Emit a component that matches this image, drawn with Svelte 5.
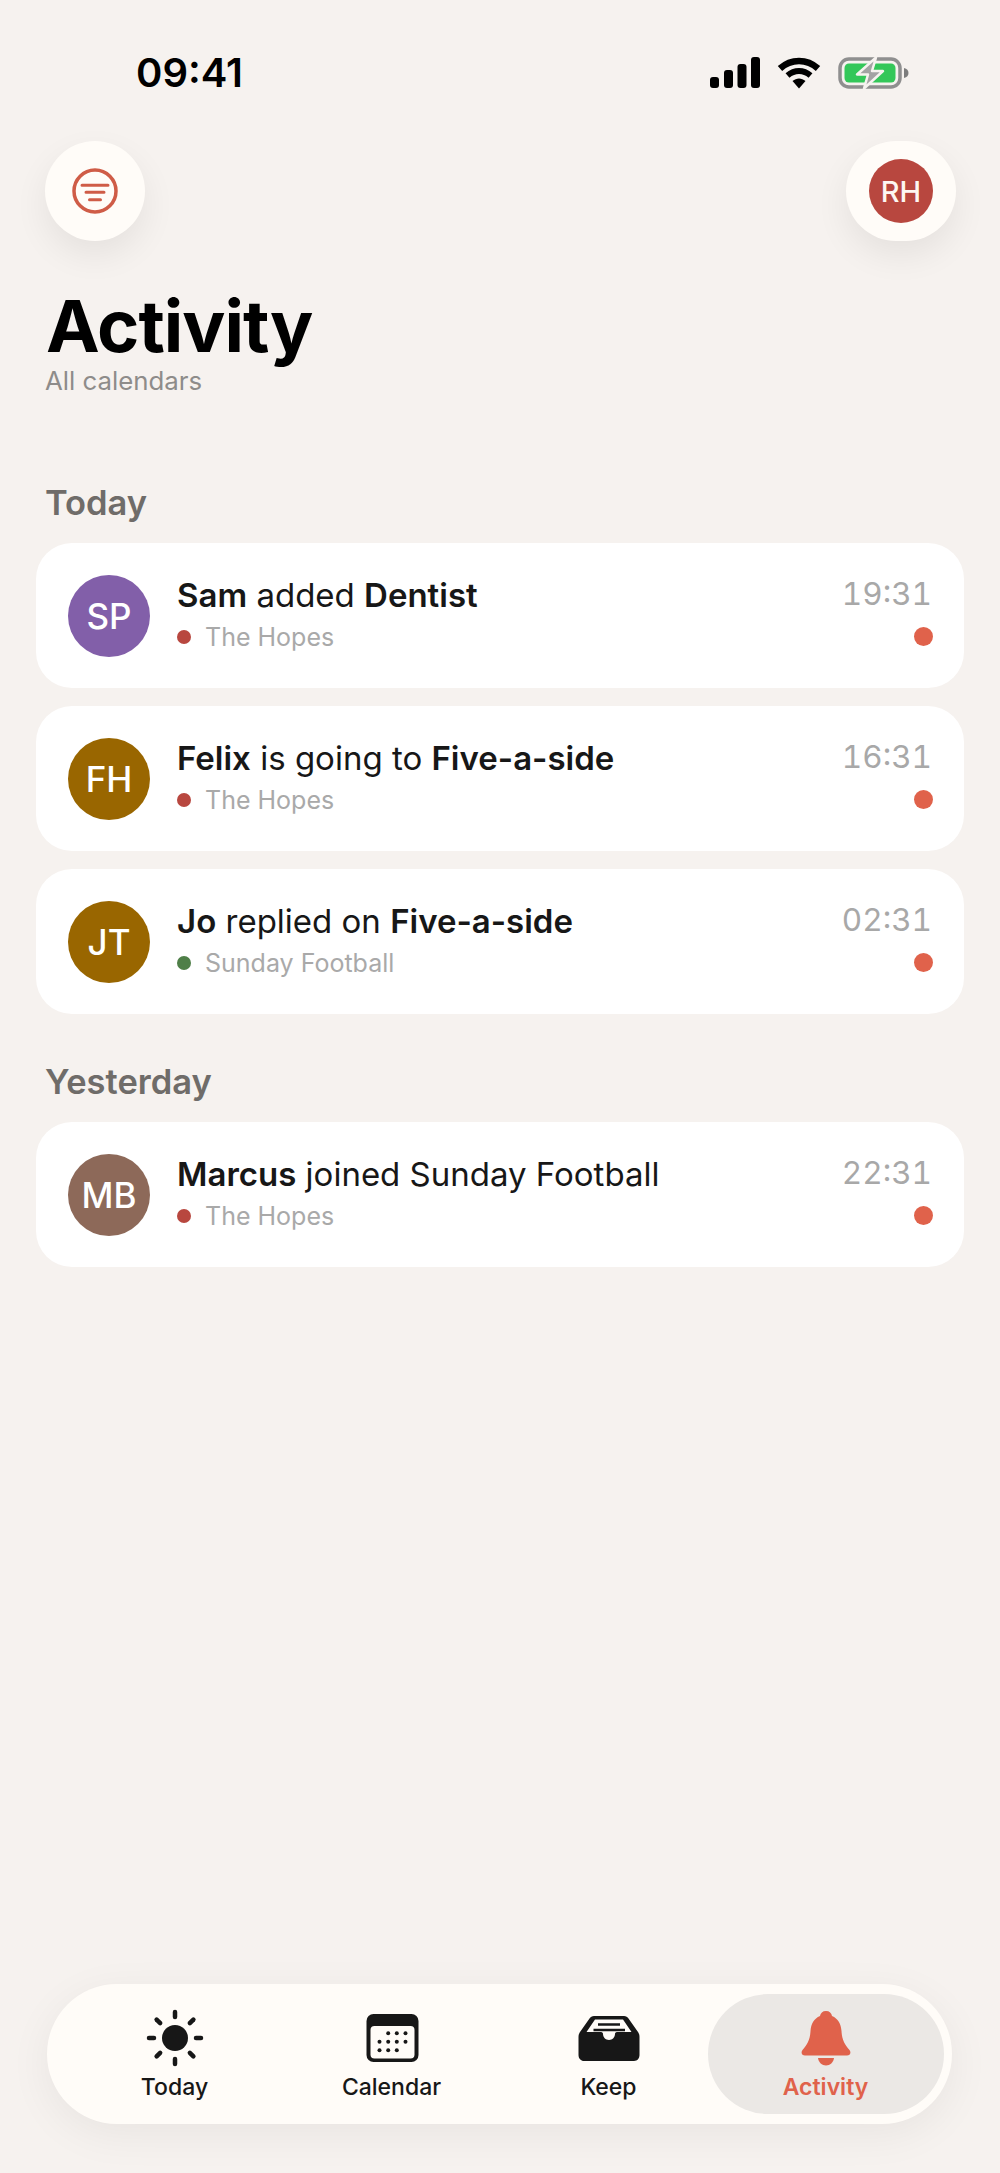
<script>
    const sections = [
        {
            label: "Today",
            items: [
                { initials: "SP", color: "#825fa9", parts: [["Sam", true], [" added ", false], ["Dentist", true]], calendar: "The Hopes", dot: "#b8473f", time: "19:31" },
                { initials: "FH", color: "#996600", parts: [["Felix", true], [" is going to ", false], ["Five-a-side", true]], calendar: "The Hopes", dot: "#b8473f", time: "16:31" },
                { initials: "JT", color: "#996600", parts: [["Jo", true], [" replied on ", false], ["Five-a-side", true]], calendar: "Sunday Football", dot: "#4f7f48", time: "02:31" },
            ],
        },
        {
            label: "Yesterday",
            items: [
                { initials: "MB", color: "#8d6959", parts: [["Marcus", true], [" joined Sunday Football", false]], calendar: "The Hopes", dot: "#b8473f", time: "22:31" },
            ],
        },
    ];

    const rays = [0, 45, 90, 135, 180, 225, 270, 315];
    const calDots = [
        [26.2, 25.3], [34.8, 25.3], [43.5, 25.3],
        [17.5, 33.7], [26.2, 33.7], [34.8, 33.7], [43.5, 33.7],
        [17.5, 42.3], [26.2, 42.3], [34.8, 42.3],
    ];
</script>

<div class="page">
    <header class="status">
        <span class="clock">09:41</span>
        <div class="status-icons">
            <svg width="50" height="32" viewBox="0 0 50 32">
                <rect x="0" y="20" width="9" height="11" rx="3" fill="#000" />
                <rect x="14" y="13" width="9" height="18" rx="3" fill="#000" />
                <rect x="27.500" y="7" width="9" height="24" rx="3" fill="#000" />
                <rect x="41" y="0" width="9" height="31" rx="3" fill="#000" />
            </svg>
            <svg width="44" height="32" viewBox="0 0 44 32">
                <path d="M3 11.500 C14 1.500 30 1.500 41 11.500" fill="none" stroke="#000" stroke-width="6.500" />
                <path d="M10.500 18.500 C17.500 12.500 26.500 12.500 33.500 18.500" fill="none" stroke="#000" stroke-width="6" />
                <path d="M15.500 24 C19.500 20.500 24.500 20.500 28.500 24 L22 31.500 Z" fill="#000" />
            </svg>
            <svg width="72" height="34" viewBox="0 0 72 34">
                <rect x="2" y="3" width="60" height="28" rx="9" fill="none" stroke="#8f8f8f" stroke-width="3.500" />
                <rect x="6.500" y="7.500" width="51" height="19" rx="4.500" fill="#34c759" />
                <path d="M66 12 C69 12.500 70.500 14.500 70.500 17 C70.500 19.500 69 21.500 66 22 Z" fill="#7d7d7d" />
                <path d="M38 1.500 L19 18.500 L30 18.500 L26 32.500 L45 15 L34 15 Z" fill="#a3a3a3" stroke="#f6f2ef" stroke-width="2.500" stroke-linejoin="round" />
            </svg>
        </div>
    </header>

    <div class="toolbar">
        <button class="round" aria-label="Filter">
            <svg width="48" height="48" viewBox="0 0 48 48" fill="none" stroke="#cf5c47" stroke-linecap="round">
                <circle cx="24" cy="24" r="21" stroke-width="3.500" />
                <path d="M11 18.300 H37 M15 25.300 H33 M18.500 32.700 H29.500" stroke-width="3" />
            </svg>
        </button>
        <button class="round wide" aria-label="Account"><span class="me">RH</span></button>
    </div>

    <h1>Activity</h1>
    <p class="subtitle">All calendars</p>

    {#each sections as section}
        <section>
            <h2>{section.label}</h2>
            <ul>
                {#each section.items as item}
                    <li class="card">
                        <span class="avatar" style="background: {item.color}">{item.initials}</span>
                        <div class="body">
                            <p class="headline">
                                {#each item.parts as [text, bold]}{#if bold}<strong>{text}</strong>{:else}{text}{/if}{/each}
                            </p>
                            <p class="calendar">
                                <span class="cal-dot" style="background: {item.dot}"></span>{item.calendar}
                            </p>
                        </div>
                        <div class="meta">
                            <span class="time">{item.time}</span>
                            <span class="unread"></span>
                        </div>
                    </li>
                {/each}
            </ul>
        </section>
    {/each}

    <nav class="tabs">
        <div class="tab">
            <svg width="60" height="60" viewBox="0 0 60 60">
                <circle cx="30" cy="30" r="13" fill="#171717" />
                {#each rays as deg}
                    <line x1="30" y1="4" x2="30" y2="9" stroke="#171717" stroke-width="4.500" stroke-linecap="round" transform="rotate({deg} 30 30)" />
                {/each}
            </svg>
            <span>Today</span>
        </div>
        <div class="tab">
            <svg width="60" height="60" viewBox="0 0 60 60">
                <rect x="4.500" y="6" width="52" height="48" rx="7" fill="#171717" />
                <rect x="8.500" y="18" width="44" height="32.500" rx="4" fill="#fffcf8" />
                {#each calDots as [cx, cy]}
                    <circle {cx} {cy} r="2" fill="#171717" />
                {/each}
            </svg>
            <span>Calendar</span>
        </div>
        <div class="tab">
            <svg width="62" height="60" viewBox="0 0 62 60">
                <path d="M16 8 H46 C48 8 49.500 9 50.500 10.500 L60 24 C61 25.500 61.500 27 61.500 29 V47 C61.500 50 59.500 53 56 53 H6 C3 53 0.500 50.500 0.500 47 V29 C0.500 27 1 25.500 2 24 L11.500 10.500 C12.500 9 14 8 16 8 Z" fill="#171717" />
                <path d="M17 11.500 H45 L53.500 24 H39 C37.500 24 37 25 37 26 C37 29 34.500 32 31 32 C27.500 32 25 29 25 26 C25 25 24.500 24 23 24 H8.500 Z" fill="#fffcf8" />
                <path d="M20 16.500 H42 M15.500 22 H47" stroke="#171717" stroke-width="2.500" />
            </svg>
            <span>Keep</span>
        </div>
        <div class="tab active">
            <svg width="60" height="60" viewBox="0 0 60 60" fill="#e0624b">
                <path d="M30 3 C33.500 3 35.500 5 36 8 C42 10.500 45 16 45.500 23 C46 32 48.500 36 53.500 42 C55.500 44.500 54 47.500 51 47.500 H9 C6 47.500 4.500 44.500 6.500 42 C11.500 36 14 32 14.500 23 C15 16 18 10.500 24 8 C24.500 5 26.500 3 30 3 Z" />
                <path d="M22 50 H38 C37.500 54.500 34 57.500 30 57.500 C26 57.500 22.500 54.500 22 50 Z" />
            </svg>
            <span>Activity</span>
        </div>
    </nav>
</div>

<style>
    :global(body) {
        background: #f6f2ef;
        font-family: Inter, "Liberation Sans", sans-serif;
        color: #171717;
    }

    p,
    h1,
    h2,
    ul {
        margin: 0;
        padding: 0;
    }

    ul {
        list-style: none;
        display: flex;
        flex-direction: column;
        gap: 18px;
    }

    .page {
        position: relative;
        height: 2173px;
        overflow: hidden;
        box-sizing: border-box;
        padding: 0 36px;
    }

    .status {
        display: flex;
        justify-content: space-between;
        align-items: center;
        height: 32px;
        padding: 57px 54px 0 100px;
    }

    .clock {
        font-size: 40px;
        font-weight: 600;
        color: #000;
        line-height: 34px;
    }

    .status-icons {
        display: flex;
        align-items: center;
        gap: 17px;
    }

    .status-icons svg {
        display: block;
    }

    .toolbar {
        display: flex;
        justify-content: space-between;
        margin-top: 52px;
        padding: 0 8px 0 9px;
    }

    .round {
        width: 100px;
        height: 100px;
        border: none;
        padding: 0;
        border-radius: 50px;
        background: #fffcf8;
        box-shadow: 0 14px 34px rgba(0, 0, 0, 0.07);
        font-family: inherit;
        display: flex;
        align-items: center;
        justify-content: center;
    }

    .round.wide {
        width: 110px;
    }

    .me {
        width: 64px;
        height: 64px;
        border-radius: 50%;
        background: #b8473f;
        color: #fdf7f2;
        font-size: 29px;
        font-weight: 500;
        display: flex;
        align-items: center;
        justify-content: center;
    }

    h1 {
        font-size: 72px;
        font-weight: 700;
        color: #000;
        line-height: 80px;
        letter-spacing: -1px;
        margin: 45px 0 0 10px;
    }

    .subtitle {
        font-size: 25.800px;
        line-height: 30px;
        color: #8e8c8a;
        margin: 0 0 0 9px;
    }

    section {
        margin-top: 48px;
    }

    section:first-of-type {
        margin-top: 87px;
    }

    h2 {
        font-size: 34.500px;
        line-height: 40px;
        font-weight: 600;
        color: #6f6c69;
        margin: 0 0 20px 9px;
    }

    .card {
        background: #fff;
        border-radius: 36px;
        height: 145px;
        box-sizing: border-box;
        padding: 0 31px 0 32px;
        display: flex;
        align-items: center;
        gap: 27px;
    }

    .avatar {
        flex: none;
        width: 82px;
        height: 82px;
        border-radius: 50%;
        color: #fff;
        font-size: 35px;
        font-weight: 500;
        display: flex;
        align-items: center;
        justify-content: center;
    }

    .body {
        flex: 1;
        min-width: 0;
        margin-top: -3px;
    }

    .headline {
        font-size: 33px;
        line-height: 40px;
        color: #171717;
    }

    strong {
        font-weight: 600;
    }

    .calendar {
        display: flex;
        align-items: center;
        gap: 14px;
        font-size: 25px;
        line-height: 32px;
        color: #a9a9a9;
        margin-top: 6px;
    }

    .cal-dot {
        width: 14px;
        height: 14px;
        border-radius: 50%;
    }

    .meta {
        display: flex;
        flex-direction: column;
        align-items: flex-end;
        gap: 14px;
        margin-top: -10px;
    }

    .time {
        font-size: 31.500px;
        line-height: 38px;
        color: #a8a8a8;
        font-variant-numeric: tabular-nums;
        margin-right: 1px;
    }

    .unread {
        width: 19px;
        height: 19px;
        border-radius: 50%;
        background: #e0624b;
    }

    .tabs {
        position: absolute;
        left: 47px;
        top: 1984px;
        width: 905px;
        height: 140px;
        box-sizing: border-box;
        padding-left: 19px;
        border-radius: 70px;
        background: #fffcf8;
        box-shadow: 0 10px 44px rgba(0, 0, 0, 0.06);
        display: flex;
    }

    .tab {
        position: relative;
        width: 217px;
        display: flex;
        flex-direction: column;
        align-items: center;
        padding-top: 24px;
        font-size: 23px;
        font-weight: 500;
        line-height: 28px;
        color: #171717;
    }

    .tab svg {
        position: relative;
        display: block;
    }

    .tab span {
        position: relative;
        margin-top: 5px;
    }

    .tab.active {
        color: #e0624b;
        font-weight: 600;
    }

    .tab.active::before {
        content: "";
        position: absolute;
        left: -9px;
        right: -10px;
        top: 10px;
        bottom: 10px;
        border-radius: 60px;
        background: #ebe8e5;
    }
</style>
